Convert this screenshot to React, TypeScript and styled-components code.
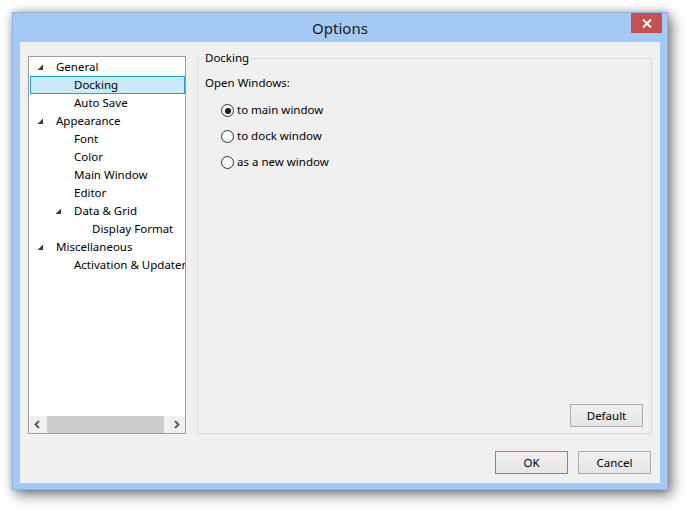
import React, { useState } from 'react';
import styled, { createGlobalStyle } from 'styled-components';

const Global = createGlobalStyle`
  html, body { margin: 0; padding: 0; background: #ffffff; }
  body { font-family: "Noto Sans", "Segoe UI", sans-serif; font-size: 11.5px; color: #000; }
  * { box-sizing: border-box; }
`;

const Page = styled.div`
  width: 688px;
  height: 511px;
  padding: 12px 0 0 12px;
  background: #ffffff;
  overflow: hidden;
`;

const Window = styled.div`
  width: 656px;
  height: 478px;
  background: #a3c9f4;
  border: 1px solid #8ab2e2;
  box-shadow: 0 0 7px rgba(0, 0, 0, 0.22), 4px 5px 13px rgba(0, 0, 0, 0.5);
  display: flex;
  flex-direction: column;
  padding: 0 6px 6px 6px;
`;

const TitleBar = styled.div`
  position: relative;
  height: 29px;
  margin: 0 -6px;
  display: flex;
  align-items: center;
  justify-content: center;
`;

const Title = styled.div`
  font-size: 15px;
  line-height: 20px;
  color: #1a1a1a;
  margin-top: 1px;
`;

const CloseButton = styled.div`
  position: absolute;
  top: 0;
  right: 5px;
  width: 31px;
  height: 20px;
  background: #c75050;
  display: flex;
  align-items: center;
  justify-content: center;
`;

const Client = styled.div`
  flex: 1;
  margin: 0 1px;
  background: #f0f0f0;
  display: flex;
  flex-direction: column;
  padding: 14px 8px 9px 8px;
`;

const ContentRow = styled.div`
  display: flex;
  gap: 11px;
  height: 378px;
`;

const Tree = styled.div`
  width: 158px;
  height: 378px;
  border: 1px solid #9d9d9d;
  background: #ffffff;
  display: flex;
  flex-direction: column;
`;

const TreeList = styled.div`
  flex: 1;
  overflow: hidden;
  padding: 1px 0 0 1px;
`;

const Row = styled.div<{ $level: number; $selected?: boolean }>`
  height: 18px;
  display: flex;
  align-items: center;
  white-space: nowrap;
  padding-left: ${p => 6 + p.$level * 18}px;
  border: 1px solid ${p => (p.$selected ? '#26a0da' : 'transparent')};
  background: ${p => (p.$selected ? '#cbe8f6' : 'transparent')};
  line-height: 16px;
`;

const Expander = styled.span`
  width: 19px;
  height: 16px;
  flex: none;
  display: flex;
  align-items: center;
  padding-top: 1px;
`;

const HScroll = styled.div`
  height: 17px;
  display: flex;
  background: #f0f0f0;
`;

const ArrowButton = styled.div`
  width: 17px;
  height: 17px;
  display: flex;
  align-items: center;
  justify-content: center;
  flex: none;
`;

const Track = styled.div`
  flex: 1;
  display: flex;
  padding: 0 4px 0 1px;
`;

const Thumb = styled.div`
  width: 117px;
  height: 100%;
  background: #cdcdcd;
`;

const Group = styled.div`
  position: relative;
  flex: 1;
  margin-top: 2px;
  border: 1px solid #dcdcdc;
  display: flex;
  flex-direction: column;
  padding: 16px 7px 6px 7px;
`;

const Legend = styled.div`
  position: absolute;
  top: -9px;
  left: 5px;
  padding: 0 2px;
  background: #f0f0f0;
  line-height: 16px;
`;

const Label = styled.div`
  line-height: 16px;
`;

const RadioList = styled.div`
  display: flex;
  flex-direction: column;
  gap: 10px;
  margin-top: 11px;
  padding-left: 16px;
`;

const RadioRow = styled.label`
  display: flex;
  align-items: center;
  gap: 3px;
  height: 16px;
  line-height: 16px;
`;

const RadioInput = styled.input`
  appearance: none;
  margin: 0;
  width: 13px;
  height: 13px;
  border-radius: 50%;
  border: 1px solid #333333;
  background: radial-gradient(circle, #ffffff 0%, #f2f2f2 100%);
  display: grid;
  place-content: center;
  margin-top: 1px;
  &:checked::before {
    content: '';
    width: 6px;
    height: 6px;
    border-radius: 50%;
    background: #1a1a1a;
  }
`;

const Button = styled.button<{ $default?: boolean }>`
  width: 73px;
  height: 23px;
  margin: 0;
  padding: 0;
  font-family: inherit;
  font-size: 11.5px;
  color: #000;
  border: 1px solid ${p => (p.$default ? '#3399ff' : '#acacac')};
  background: linear-gradient(#f0f0f0, #e5e5e5);
  display: flex;
  align-items: center;
  justify-content: center;
`;

const GroupFooter = styled.div`
  margin-top: auto;
  display: flex;
  justify-content: flex-end;
  padding-right: 1px;
`;

const ButtonRow = styled.div`
  display: flex;
  justify-content: flex-end;
  gap: 10px;
  margin-top: 17px;
  padding-right: 1px;
`;

const Triangle = () => (
  <svg width="7" height="7" viewBox="0 0 7 7">
    <polygon points="6,0.5 6,6 0.5,6" fill="#3a3a3a" />
  </svg>
);

const Chevron = ({ dir }: { dir: 'left' | 'right' }) => (
  <svg width="7" height="9" viewBox="0 0 7 9">
    <polyline
      points={dir === 'left' ? '5,1 1.5,4.5 5,8' : '2,1 5.5,4.5 2,8'}
      fill="none"
      stroke="#5f5f5f"
      strokeWidth="2"
    />
  </svg>
);

const items: { label: string; level: number; expandable?: boolean; selected?: boolean }[] = [
  { label: 'General', level: 0, expandable: true },
  { label: 'Docking', level: 1, selected: true },
  { label: 'Auto Save', level: 1 },
  { label: 'Appearance', level: 0, expandable: true },
  { label: 'Font', level: 1 },
  { label: 'Color', level: 1 },
  { label: 'Main Window', level: 1 },
  { label: 'Editor', level: 1 },
  { label: 'Data & Grid', level: 1, expandable: true },
  { label: 'Display Format', level: 2 },
  { label: 'Miscellaneous', level: 0, expandable: true },
  { label: 'Activation & Updater', level: 1 },
];

const options = ['to main window', 'to dock window', 'as a new window'];

export default function App() {
  const [choice, setChoice] = useState(0);
  return (
    <>
      <Global />
      <Page>
        <Window>
          <TitleBar>
            <Title>Options</Title>
            <CloseButton>
              <svg width="10" height="9" viewBox="0 0 10 9">
                <path d="M1 0.5 L9 8.5 M9 0.5 L1 8.5" stroke="#ffffff" strokeWidth="2" />
              </svg>
            </CloseButton>
          </TitleBar>
          <Client>
            <ContentRow>
              <Tree>
                <TreeList>
                  {items.map(it => (
                    <Row key={it.label} $level={it.level} $selected={it.selected}>
                      <Expander>{it.expandable && <Triangle />}</Expander>
                      {it.label}
                    </Row>
                  ))}
                </TreeList>
                <HScroll>
                  <ArrowButton>
                    <Chevron dir="left" />
                  </ArrowButton>
                  <Track>
                    <Thumb />
                  </Track>
                  <ArrowButton>
                    <Chevron dir="right" />
                  </ArrowButton>
                </HScroll>
              </Tree>
              <Group>
                <Legend>Docking</Legend>
                <Label>Open Windows:</Label>
                <RadioList>
                  {options.map((o, i) => (
                    <RadioRow key={o}>
                      <RadioInput
                        type="radio"
                        name="open"
                        checked={choice === i}
                        onChange={() => setChoice(i)}
                      />
                      {o}
                    </RadioRow>
                  ))}
                </RadioList>
                <GroupFooter>
                  <Button>Default</Button>
                </GroupFooter>
              </Group>
            </ContentRow>
            <ButtonRow>
              <Button $default>OK</Button>
              <Button>Cancel</Button>
            </ButtonRow>
          </Client>
        </Window>
      </Page>
    </>
  );
}
